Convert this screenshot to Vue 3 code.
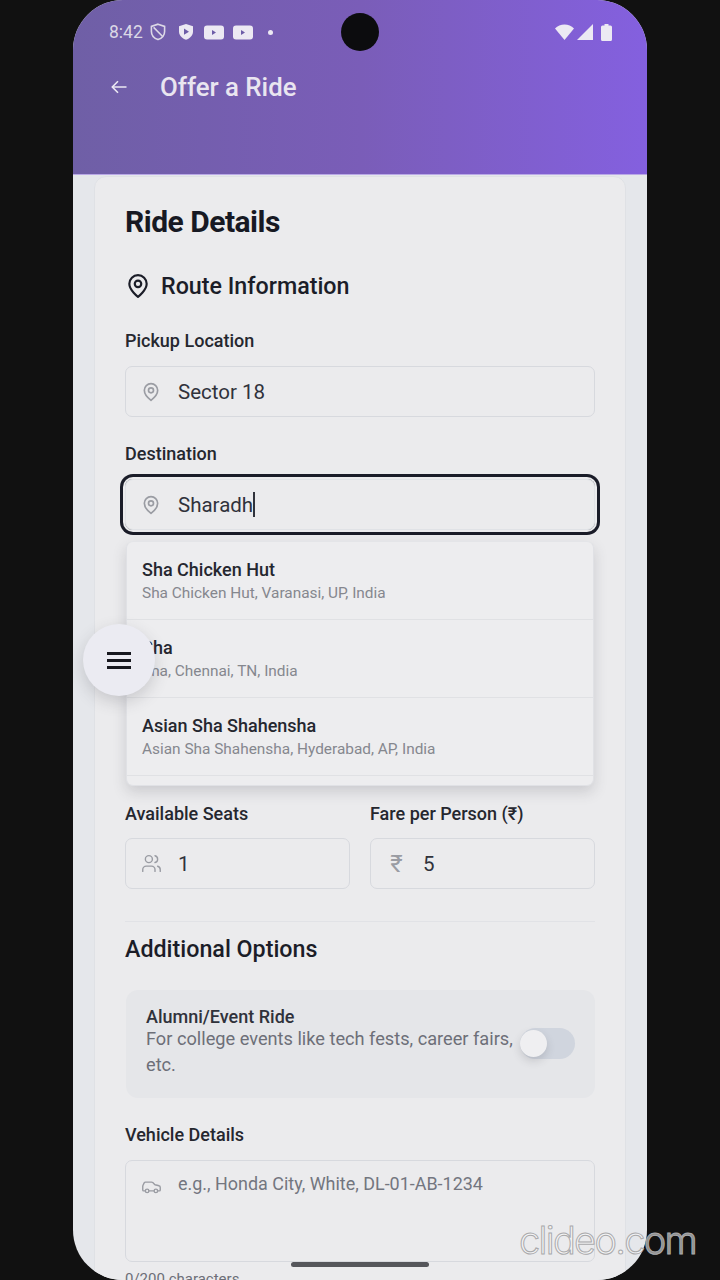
<template>
  <div class="screen">
    <div class="phone">
      <header class="hero">
        <div class="status">
          <div class="status__left">
            <span class="status__time">8:42</span>
            <svg class="ic-shield" width="16" height="18" viewBox="0 0 16 18" fill="none" stroke="currentColor" stroke-width="1.6">
              <path d="M8 1.2 14.6 3.4v5c0 3.8-2.8 6.8-6.6 8.2C4.2 15.200 1.400 12.200 1.400 8.400v-5z" />
              <path d="M3.600 4.400 12.400 13.200" />
            </svg>
            <svg class="ic-shield2" width="16" height="18" viewBox="0 0 16 18">
              <path d="M8 1 15 3.300v5.200c0 3.800-3 6.900-7 8.300-4-1.400-7-4.500-7-8.300V3.300z" fill="currentColor" />
              <path d="M6 5.500 11 8.700 6 11.800z" fill="#6d5da8" />
            </svg>
            <svg v-for="n in 2" :key="n" class="ic-yt" width="20" height="15" viewBox="0 0 20 15">
              <rect width="20" height="14" y="0.500" rx="3" fill="currentColor" />
              <path d="M8 5 12 7.500 8 10z" fill="#6d5da8" />
            </svg>
            <span class="status__dot"></span>
          </div>
          <div class="status__right">
            <svg width="19" height="16" viewBox="0 0 19 16"><path d="M0 4.500C2.600 1.800 5.800.5 9.500.5s6.900 1.300 9.500 4L9.500 16z" fill="currentColor" /></svg>
            <svg width="16" height="16" viewBox="0 0 16 16"><path d="M16 0v16H0z" fill="currentColor" /></svg>
            <svg width="11" height="17" viewBox="0 0 11 17"><path d="M3.500 0h4v1.500h2A1.500 1.500 0 0 1 11 3v12.500a1.500 1.500 0 0 1-1.500 1.500h-8A1.500 1.500 0 0 1 0 15.500V3a1.500 1.500 0 0 1 1.500-1.500h2z" fill="currentColor" /></svg>
          </div>
        </div>
        <div class="appbar">
          <svg width="16" height="14" viewBox="0 0 16 14" fill="none" stroke="currentColor" stroke-width="1.600">
            <path d="M15.500 7H1.500" />
            <path d="M7 1.200 1.300 7 7 12.800" />
          </svg>
          <h1 class="appbar__title">Offer a Ride</h1>
        </div>
      </header>

      <main class="body">
        <section class="card">
          <h2 class="card__title">Ride Details</h2>

          <div class="section-head">
            <svg width="26" height="26" viewBox="0 0 24 24" fill="none" stroke="currentColor" stroke-width="2" stroke-linecap="round" stroke-linejoin="round">
              <path d="M20 10c0 6-8 12-8 12s-8-6-8-12a8 8 0 0 1 16 0z" />
              <circle cx="12" cy="10" r="3" />
            </svg>
            <span>Route Information</span>
          </div>

          <label class="label label--pickup">Pickup Location</label>
          <div class="field">
            <svg class="field__icon" width="20" height="20" viewBox="0 0 24 24" fill="none" stroke="currentColor" stroke-width="2" stroke-linecap="round" stroke-linejoin="round">
              <path d="M20 10c0 6-8 12-8 12s-8-6-8-12a8 8 0 0 1 16 0z" />
              <circle cx="12" cy="10" r="3" />
            </svg>
            <span class="field__value">Sector 18</span>
          </div>

          <label class="label label--dest">Destination</label>
          <div class="field field--focus">
            <svg class="field__icon" width="20" height="20" viewBox="0 0 24 24" fill="none" stroke="currentColor" stroke-width="2" stroke-linecap="round" stroke-linejoin="round">
              <path d="M20 10c0 6-8 12-8 12s-8-6-8-12a8 8 0 0 1 16 0z" />
              <circle cx="12" cy="10" r="3" />
            </svg>
            <span class="field__value">Sharadh</span><span class="caret"></span>
          </div>

          <ul class="suggest">
            <li v-for="s in suggestions" :key="s.sub" class="suggest__item">
              <div class="suggest__name">{{ s.name }}</div>
              <div class="suggest__sub">{{ s.sub }}</div>
            </li>
          </ul>

          <div class="two-col">
            <div>
              <label class="label label--tight">Available Seats</label>
              <div class="field">
                <svg class="field__icon field__icon--lg" width="21" height="21" viewBox="0 0 24 24" fill="none" stroke="currentColor" stroke-width="1.600" stroke-linecap="round" stroke-linejoin="round">
                  <path d="M16 21v-2a4 4 0 0 0-4-4H6a4 4 0 0 0-4 4v2" />
                  <circle cx="9" cy="7" r="4" />
                  <path d="M22 21v-2a4 4 0 0 0-3-3.870" />
                  <path d="M16 3.130a4 4 0 0 1 0 7.750" />
                </svg>
                <span class="field__value">1</span>
              </div>
            </div>
            <div>
              <label class="label label--tight">Fare per Person (₹)</label>
              <div class="field">
                <span class="field__icon field__rupee">₹</span>
                <span class="field__value">5</span>
              </div>
            </div>
          </div>

          <hr class="divider" />

          <h3 class="options-title">Additional Options</h3>

          <div class="option">
            <div class="option__text">
              <div class="option__name">Alumni/Event Ride</div>
              <div class="option__desc">For college events like tech fests, career fairs, etc.</div>
            </div>
            <div class="toggle"><span class="toggle__knob"></span></div>
          </div>

          <label class="label label--vehicle">Vehicle Details</label>
          <div class="field field--area">
            <svg class="field__icon field__icon--lg" width="21" height="21" viewBox="0 0 24 24" fill="none" stroke="currentColor" stroke-width="1.600" stroke-linecap="round" stroke-linejoin="round">
              <path d="M19 17h2c.6 0 1-.4 1-1v-3c0-.9-.7-1.700-1.500-1.900C18.700 10.600 16 10 16 10s-1.300-1.400-2.200-2.300c-.5-.4-1.100-.7-1.800-.7H5c-.6 0-1.100.4-1.400.9l-1.400 2.900A3.700 3.700 0 0 0 2 12v4c0 .6.4 1 1 1h2" />
              <circle cx="7" cy="17" r="2" />
              <path d="M9 17h6" />
              <circle cx="17" cy="17" r="2" />
            </svg>
            <span class="field__placeholder">e.g., Honda City, White, DL-01-AB-1234</span>
          </div>
          <div class="counter">0/200 characters</div>
        </section>
      </main>

      <span class="camera"></span>
      <button class="fab" type="button" aria-label="Menu">
        <span></span><span></span><span></span>
      </button>
      <span class="gesture"></span>
    </div>
    <span class="watermark">clideo.com</span>
  </div>
</template>

<script setup>
const suggestions = [
  { name: 'Sha Chicken Hut', sub: 'Sha Chicken Hut, Varanasi, UP, India' },
  { name: 'Sha', sub: 'Sha, Chennai, TN, India' },
  { name: 'Asian Sha Shahensha', sub: 'Asian Sha Shahensha, Hyderabad, AP, India' }
]
</script>

<style>
html, body {
  margin: 0;
  background: #111;
}
</style>

<style scoped>
.screen {
  position: relative;
  width: 720px;
  height: 1280px;
  background: #111;
  display: flex;
  justify-content: center;
  overflow: hidden;
  font-family: Roboto, "Liberation Sans", sans-serif;
  color: #1b1d28;
}

.phone {
  position: relative;
  width: 574px;
  height: 1280px;
  border-radius: 50px;
  overflow: hidden;
  background: #e5e7eb;
}

.hero {
  height: 175px;
  box-sizing: border-box;
  background: linear-gradient(90deg, #6f5fa6 0%, #7a5db8 50%, #8460df 100%);
  border-bottom: 1px solid #b9a8e6;
  color: #ece9f3;
}

.status {
  display: flex;
  justify-content: space-between;
  align-items: center;
  height: 64px;
  padding: 0 35px 0 36px;
}

.status__left {
  display: flex;
  align-items: center;
}

.status__time {
  font-size: 17.500px;
  width: 41px;
  color: #dcd8e6;
}

.ic-shield {
  color: #dcd8e6;
  margin-right: 12px;
}

.ic-shield2 {
  margin-right: 10px;
}

.ic-yt {
  margin-right: 9px;
}

.status__dot {
  width: 5px;
  height: 5px;
  margin-left: 6px;
  border-radius: 50%;
  background: currentColor;
}

.status__right {
  display: flex;
  align-items: center;
  gap: 3px;
}

.status__right svg:last-child {
  margin-left: 5px;
}

.appbar {
  display: flex;
  align-items: center;
  height: 46px;
  padding-left: 38px;
}

.appbar__title {
  margin: 0 0 0 33px;
  font-size: 25.800px;
  font-weight: 500;
  color: #e9e5f0;
}

.body {
  padding: 1px 21px 0;
}

.card {
  box-sizing: border-box;
  height: 1200px;
  padding: 0 30px;
  background: #ebebed;
  border: 1px solid #dfe1e5;
  border-radius: 12px;
}

.card__title {
  margin: 25px 0 0;
  font-size: 30px;
  line-height: 40px;
  font-weight: 700;
  letter-spacing: -0.5px;
  color: #171923;
}

.section-head {
  display: flex;
  align-items: center;
  gap: 10px;
  height: 32px;
  margin-top: 28px;
  font-size: 23.250px;
  font-weight: 500;
}

.label {
  display: block;
  font-size: 18px;
  line-height: 24px;
  font-weight: 500;
  color: #25272f;
  margin-bottom: 13px;
}

.label--pickup {
  margin-top: 27px;
}

.label--dest {
  margin-top: 25px;
}

.label--tight {
  margin-bottom: 12px;
}

.field {
  box-sizing: border-box;
  display: flex;
  align-items: center;
  height: 51px;
  padding-left: 15px;
  border: 1px solid #d7d9de;
  border-radius: 7px;
  font-size: 20.500px;
  color: #30323b;
}

.field--focus {
  margin-top: 12px;
  border-color: #e0e2e6;
  border-radius: 8px;
  box-shadow: 0 0 0 2px #ebebed, 0 0 0 5px #1a1c28;
}

.field__icon {
  flex: none;
  color: #9a9ca3;
  margin-right: 17px;
}

.field__icon--lg {
  margin-right: 16px;
}

.field__rupee {
  width: 21px;
  margin-right: 16px;
  font-size: 24px;
  line-height: 24px;
  text-align: center;
}

.caret {
  width: 1.500px;
  height: 25px;
  background: #30323b;
}

.suggest {
  list-style: none;
  margin: 11px 1px 0;
  padding: 0 0 9px;
  background: #ededef;
  border: 1px solid #e0e1e5;
  border-top-color: #e4e5e8;
  border-radius: 7px;
  box-shadow: 0 6px 14px rgba(60, 60, 70, 0.18);
}

.suggest__item {
  box-sizing: border-box;
  height: 78px;
  padding: 15px 15px 0;
  border-bottom: 1px solid #e0e1e4;
}

.suggest__name {
  font-size: 18px;
  line-height: 26px;
  font-weight: 500;
  color: #25272f;
}

.suggest__sub {
  font-size: 15.400px;
  line-height: 20px;
  color: #85878e;
}

.two-col {
  display: grid;
  grid-template-columns: 1fr 1fr;
  gap: 20px;
  margin-top: 16px;
}

.divider {
  height: 1px;
  margin: 32px 0 0;
  border: 0;
  background: #e1e2e6;
}

.options-title {
  margin: 10px 0 0;
  font-size: 23.250px;
  line-height: 34px;
  font-weight: 500;
}

.option {
  display: flex;
  align-items: center;
  box-sizing: border-box;
  height: 108px;
  margin: 24px 0 0 1px;
  padding: 0 20px;
  border-radius: 12px;
  background: #e5e6e9;
}

.option__text {
  flex: 1;
  padding: 0 4px 2px 0;
}

.option__name {
  font-size: 18px;
  line-height: 18px;
  font-weight: 500;
  color: #30323b;
}

.option__desc {
  font-size: 18.200px;
  line-height: 26px;
  color: #6d6f78;
}

.toggle {
  flex: none;
  width: 55px;
  height: 31px;
  padding: 2px 0;
  box-sizing: border-box;
  border-radius: 16px;
  background: #d0d5de;
  transform: translateY(-1px);
}

.toggle__knob {
  display: block;
  width: 27px;
  height: 27px;
  border-radius: 50%;
  background: #efeff1;
  box-shadow: 0 4px 8px rgba(60, 60, 70, 0.18);
}

.label--vehicle {
  margin-top: 25px;
}

.field--area {
  align-items: flex-start;
  height: 102px;
  padding-top: 12px;
}

.field--area .field__icon {
  margin-top: 3px;
}

.field__placeholder {
  font-size: 17.950px;
  line-height: 22px;
  color: #73767f;
}

.counter {
  margin-top: 8px;
  font-size: 15px;
  color: #6d6f78;
}

.camera {
  position: absolute;
  top: 13px;
  left: 268px;
  width: 38px;
  height: 38px;
  border-radius: 50%;
  background: #0c0c0e;
}

.fab {
  position: absolute;
  left: 10px;
  top: 624px;
  width: 72px;
  height: 72px;
  display: flex;
  flex-direction: column;
  align-items: center;
  justify-content: center;
  gap: 4px;
  padding: 0;
  border: 0;
  border-radius: 50%;
  background: #ebebf2;
  box-shadow: 0 6px 16px rgba(60, 60, 70, 0.2);
}

.fab span {
  display: block;
  width: 24px;
  height: 3px;
  background: #17181f;
}

.gesture {
  position: absolute;
  left: 218px;
  bottom: 13px;
  width: 138px;
  height: 5px;
  border-radius: 3px;
  background: #55565b;
}

.watermark {
  position: absolute;
  left: 519px;
  top: 1216px;
  font-family: Inter, Roboto, sans-serif;
  font-weight: 300;
  font-size: 38px;
  line-height: 48px;
  letter-spacing: -1.700px;
  color: rgba(255, 255, 255, 0.55);
  -webkit-text-stroke: 1px #a9a9ab;
}
</style>
